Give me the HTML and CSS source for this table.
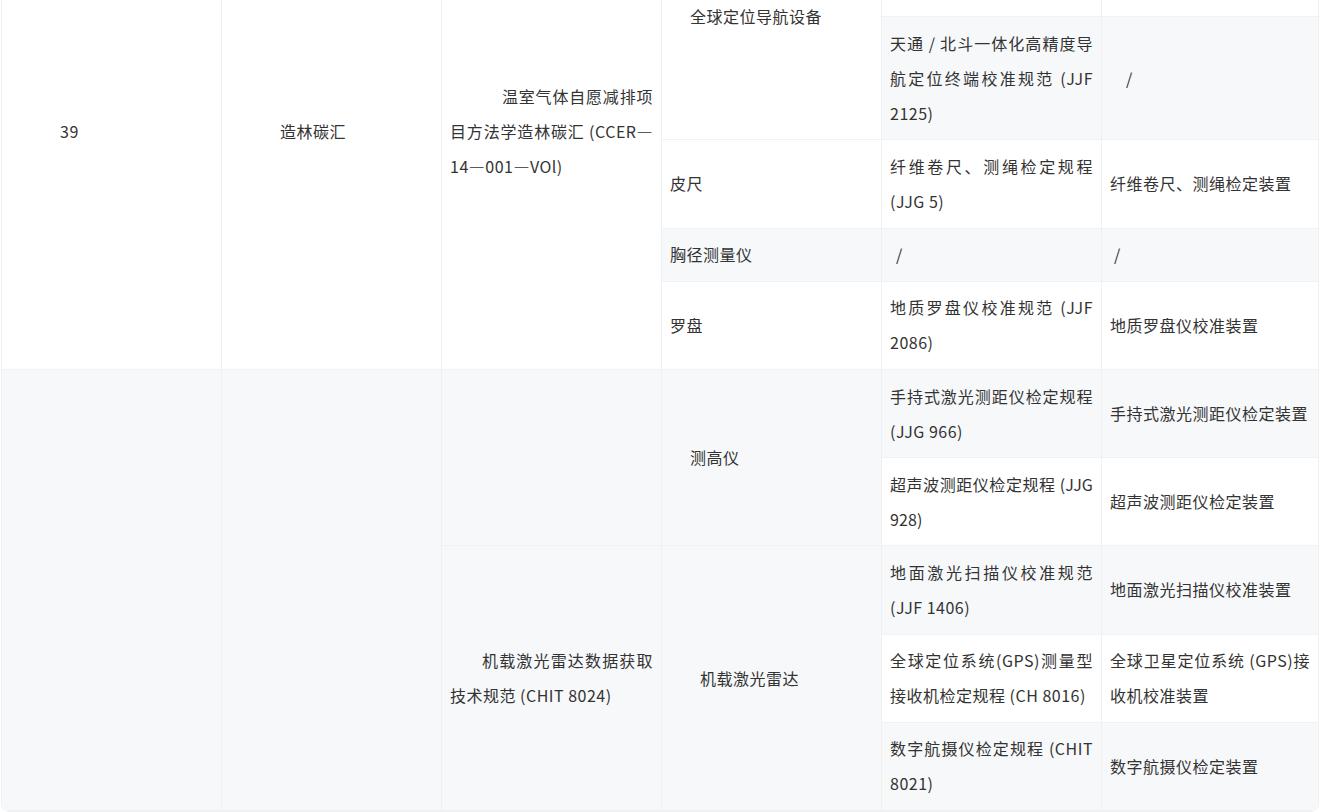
FILE: index.html
```html
<!DOCTYPE html>
<html lang="zh-CN">
<head>
<meta charset="utf-8">
<title>造林碳汇 计量器具</title>
<link rel="stylesheet" href="styles.css">
</head>
<body>
<div class="table-wrap">
  <table class="data-table">
    <colgroup>
      <col class="c1"><col class="c2"><col class="c3"><col class="c4"><col class="c5"><col class="c6">
    </colgroup>
    <tbody>
      <tr>
        <td rowspan="5" class="ind-50">39</td>
        <td rowspan="5" class="ind-50">造林碳汇</td>
        <td rowspan="5" class="ind-52">温室气体自愿减排项目方法学造林碳汇 (CCER—14—001—VOl)</td>
        <td rowspan="2" class="ind-20">全球定位导航设备</td>
        <td>全球导航卫星系统接收机校准规范<br>(JJF 1403)</td>
        <td>全球导航卫星系统接收机校准装置</td>
      </tr>
      <tr>
        <td>天通 / 北斗一体化高精度导航定位终端校准规范 (JJF 2125)</td>
        <td class="ind-16">/</td>
      </tr>
      <tr>
        <td>皮尺</td>
        <td>纤维卷尺、测绳检定规程 (JJG 5)</td>
        <td>纤维卷尺、测绳检定装置</td>
      </tr>
      <tr>
        <td>胸径测量仪</td>
        <td class="ind-6">/</td>
        <td class="ind-4">/</td>
      </tr>
      <tr>
        <td>罗盘</td>
        <td>地质罗盘仪校准规范 (JJF 2086)</td>
        <td>地质罗盘仪校准装置</td>
      </tr>
      <tr>
        <td rowspan="5"></td>
        <td rowspan="5"></td>
        <td rowspan="2"></td>
        <td rowspan="2" class="ind-20">测高仪</td>
        <td>手持式激光测距仪检定规程 (JJG 966)</td>
        <td>手持式激光测距仪检定装置</td>
      </tr>
      <tr>
        <td class="tight">超声波测距仪检定规程 (JJG 928)</td>
        <td>超声波测距仪检定装置</td>
      </tr>
      <tr>
        <td rowspan="3" class="ind-32">机载激光雷达数据获取技术规范 (CHIT 8024)</td>
        <td rowspan="3" class="ind-30">机载激光雷达</td>
        <td>地面激光扫描仪校准规范 (JJF 1406)</td>
        <td>地面激光扫描仪校准装置</td>
      </tr>
      <tr>
        <td>全球定位系统(GPS)测量型接收机检定规程 (CH 8016)</td>
        <td>全球卫星定位系统 (GPS)接收机校准装置</td>
      </tr>
      <tr>
        <td>数字航摄仪检定规程 (CHIT 8021)</td>
        <td>数字航摄仪检定装置</td>
      </tr>
    </tbody>
  </table>
</div>
</body>
</html>
```

FILE: styles.css
```css
html, body {
  margin: 0;
  padding: 0;
  background: #ffffff;
}

body {
  font-family: "Noto Sans CJK SC", "Noto Sans", sans-serif;
  font-size: 16px;
  color: #333333;
  overflow: hidden;
}

.table-wrap {
  margin: -107px 0 0 1px;
  width: 1316px;
  border: 1px solid #eef0f3;
  border-radius: 8px;
  overflow: hidden;
  background: #ffffff;
}

.data-table {
  width: 1316px;
  table-layout: fixed;
  border-collapse: separate;
  border-spacing: 0;
}

.c1, .c2, .c3, .c4, .c5 {
  width: 220px;
}

.c6 {
  width: 216px;
}

.data-table td {
  box-sizing: border-box;
  padding: 8.6px 8px;
  line-height: 35px;
  letter-spacing: 0.5px;
  text-align: justify;
  vertical-align: middle;
  border-right: 1px solid #eef0f3;
  border-bottom: 1px solid #f1f2f5;
  overflow-wrap: break-word;
}

.data-table td:last-child {
  border-right: none;
}

.data-table tr:nth-child(even) td {
  background: #f7f8fa;
}

.data-table td.tight {
  letter-spacing: 0.1px;
}

.ind-4 { text-indent: 4px; }
.ind-6 { text-indent: 6px; }
.ind-16 { text-indent: 16px; }
.ind-20 { text-indent: 20px; }
.ind-30 { text-indent: 30px; }
.ind-32 { text-indent: 32px; }
.ind-50 { text-indent: 50px; }
.ind-52 { text-indent: 52px; }
```
